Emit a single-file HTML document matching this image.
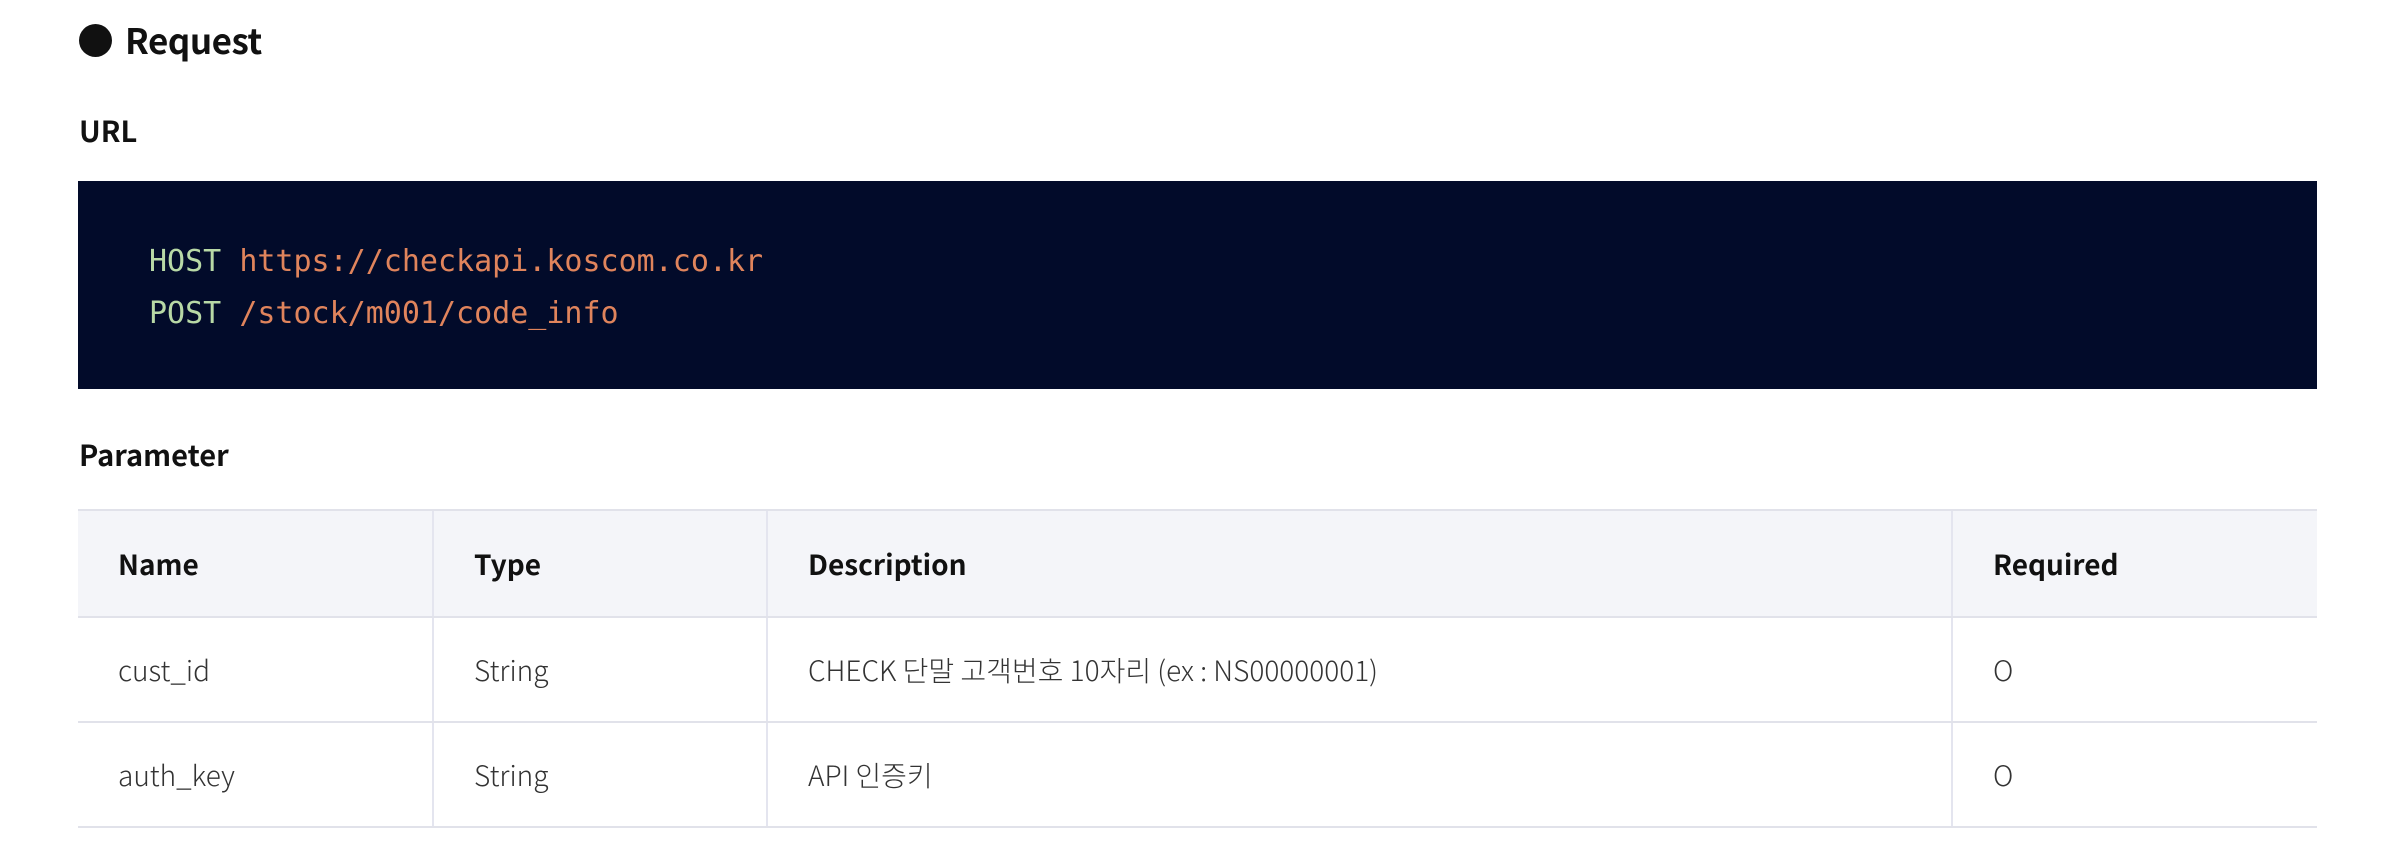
<!DOCTYPE html>
<html><head><meta charset="utf-8"><style>
*{margin:0;padding:0;box-sizing:border-box}
body{width:2390px;height:854px;background:#fff;font-family:"Noto Sans CJK KR","Liberation Sans",sans-serif;color:#111;position:relative;overflow:hidden}
.abs{position:absolute}
.h1{left:79px;top:16px;font-size:35px;font-weight:bold;line-height:48px;letter-spacing:-0.5px;display:flex;align-items:center}
.dot{width:33px;height:33px;border-radius:50%;background:#111;margin-right:13px}
.h2{left:79px;font-size:29px;font-weight:bold;line-height:40px}
.code{left:78px;top:181px;width:2239px;height:208px;background:#020b2a;font-family:"DejaVu Sans Mono","Liberation Mono",monospace;font-size:30px;line-height:52px;padding:55px 0 0 71px}
.g{color:#b8d9a6}.o{color:#e0845c}
table{position:absolute;left:78px;top:509px;width:2239px;border-collapse:collapse;font-size:28px}
th,td{text-align:left;padding:0 0 0 40px;border-top:2px solid #e1e2ea;border-bottom:2px solid #e1e2ea;border-left:2px solid #e4e5ef}
th:first-child,td:first-child{border-left:none}
th{background:#f4f5f9;height:107px;font-weight:bold;color:#111}
td{height:105px;color:#333;font-weight:300}
</style></head><body>
<div class="abs h1"><span class="dot"></span>Request</div>
<div class="abs h2" style="top:110px">URL</div>
<div class="abs code"><div><span class="g">HOST</span> <span class="o">https://checkapi.koscom.co.kr</span></div><div><span class="g">POST</span> <span class="o">/stock/m001/code_info</span></div></div>
<div class="abs h2" style="top:434px">Parameter</div>
<table>
<tr><th style="width:355px">Name</th><th style="width:334px">Type</th><th style="width:1185px">Description</th><th>Required</th></tr>
<tr><td>cust_id</td><td>String</td><td>CHECK 단말 고객번호 10자리 (ex : NS00000001)</td><td>O</td></tr>
<tr><td>auth_key</td><td>String</td><td>API 인증키</td><td>O</td></tr>
</table>
</body></html>
